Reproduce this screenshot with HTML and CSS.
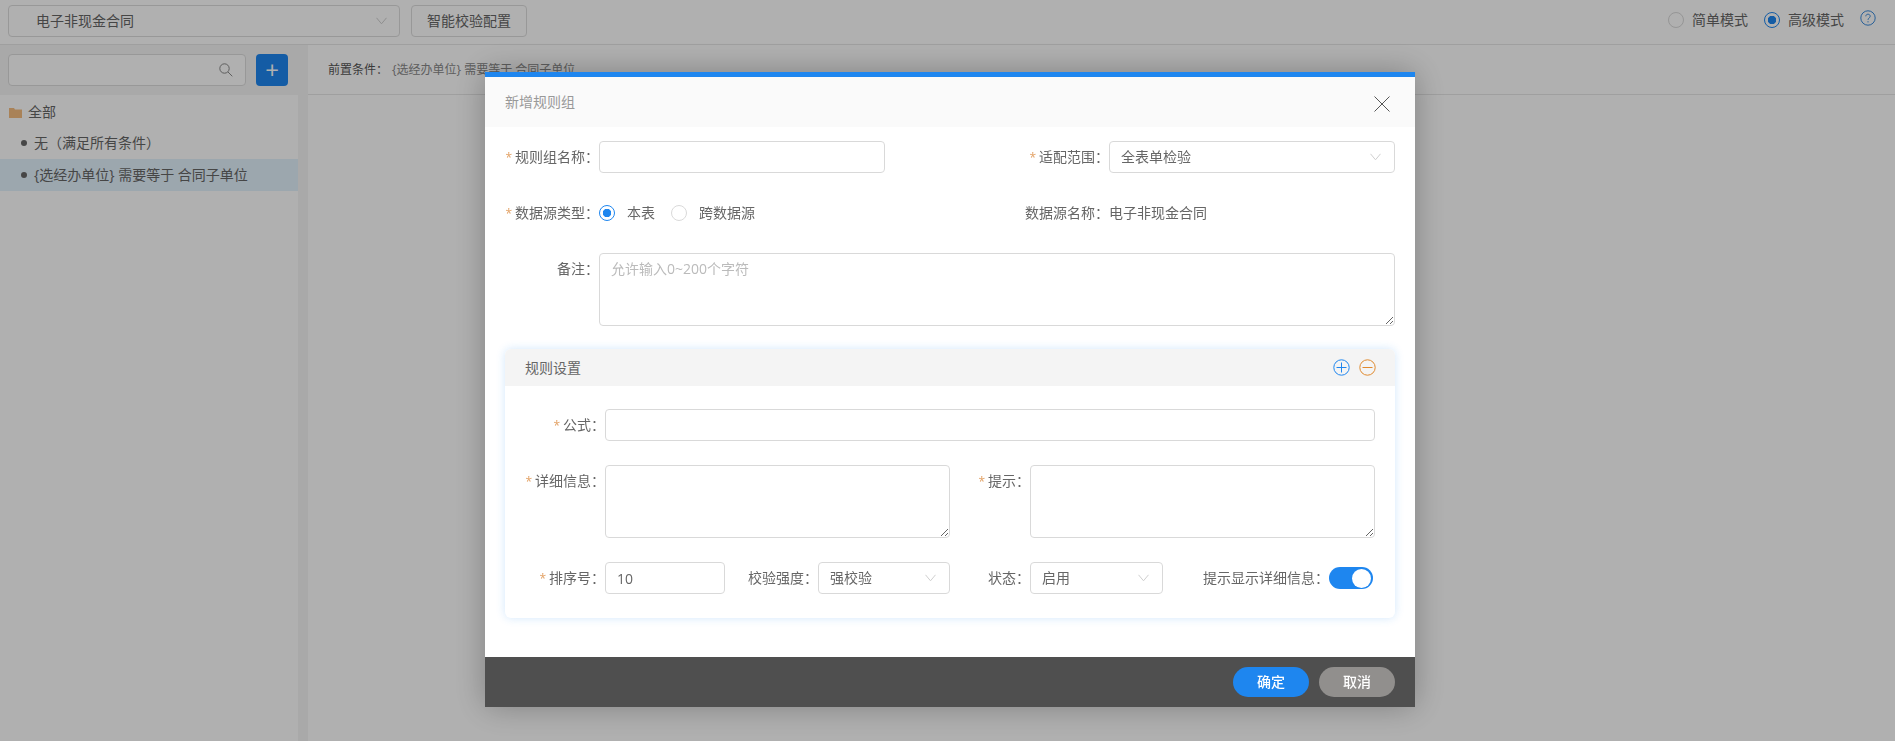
FILE: index.html
```html
<!DOCTYPE html>
<html lang="zh-CN">
<head>
<meta charset="utf-8">
<title>智能校验</title>
<link rel="stylesheet" href="styles.css">
</head>
<body>
<div class="page">
  <header class="topbar">
    <div class="top-select"><span>电子非现金合同</span>
      <svg class="chev" width="11" height="8" viewBox="0 0 11 8"><path d="M.5.800l5 6 5-6"/></svg>
    </div>
    <button class="top-btn">智能校验配置</button>
    <div class="modes">
      <span class="radio"></span><span class="mode-text">简单模式</span>
      <span class="radio radio-on"></span><span class="mode-text">高级模式</span>
      <svg class="help" width="16" height="16" viewBox="0 0 16 16"><circle cx="8" cy="8" r="7.200"/><path d="M5.800 6.300C5.800 5 6.800 4.200 8 4.200s2.200.8 2.200 2c0 1.800-2.200 1.700-2.200 3.700"/><path d="M8 11.200v1.200"/></svg>
    </div>
  </header>
  <div class="main">
    <aside class="sidebar">
      <div class="search-row">
        <div class="search">
          <svg width="14" height="14" viewBox="0 0 14 14"><circle cx="5.500" cy="5.500" r="4.700"/><path d="M9 9l4.300 4.300"/></svg>
        </div>
        <button class="add">+</button>
      </div>
      <div class="tree-root">
        <svg width="13" height="11" viewBox="0 0 13 11"><path d="M0 1h5l1 1.500h7V11H0z"/></svg>
        <span>全部</span>
      </div>
      <div class="tree-item"><i class="dot"></i>无（满足所有条件）</div>
      <div class="tree-item tree-selected"><i class="dot"></i>{选经办单位} 需要等于 合同子单位</div>
    </aside>
    <div class="gutter"></div>
    <section class="content">
      <div class="cond"><b>前置条件：</b><span>{选经办单位} 需要等于 合同子单位</span></div>
    </section>
  </div>
</div>

<div class="overlay">
  <div class="modal">
    <div class="modal-head">
      <span>新增规则组</span>
      <svg class="close" width="16" height="16" viewBox="0 0 16 16"><path d="M.5.500l15 15M15.500.500l-15 15"/></svg>
    </div>
    <div class="modal-body">
      <div class="row">
        <div class="field"><label class="lab w94"><em>*</em>规则组名称：</label><input class="ctl w286" type="text"></div>
        <div class="field"><label class="lab"><em>*</em>适配范围：</label>
          <div class="ctl w286 sel"><span>全表单检验</span><svg class="chev" width="11" height="8" viewBox="0 0 11 8"><path d="M.5.800l5 6 5-6"/></svg></div>
        </div>
      </div>
      <div class="row">
        <div class="field"><label class="lab w94"><em>*</em>数据源类型：</label>
          <div class="radios">
            <span class="radio radio-on"></span><span class="rtext">本表</span>
            <span class="radio"></span><span class="rtext">跨数据源</span>
          </div>
        </div>
        <div class="field"><label class="lab">数据源名称：</label><div class="w286 val">电子非现金合同</div></div>
      </div>
      <div class="field">
        <label class="lab w94">备注：</label>
        <textarea class="ctl area-note" placeholder="允许输入0~200个字符"></textarea>
      </div>
      <div class="card">
        <div class="card-head">
          <span>规则设置</span>
          <div class="card-icons">
            <svg class="ic-plus" width="17" height="17" viewBox="0 0 17 17"><circle cx="8.500" cy="8.500" r="7.700"/><path d="M3.500 8.500h10M8.500 3.500v10"/></svg>
            <svg class="ic-minus" width="17" height="17" viewBox="0 0 17 17"><circle cx="8.500" cy="8.500" r="7.700"/><path d="M3.500 8.500h10"/></svg>
          </div>
        </div>
        <div class="card-body">
          <div class="field"><label class="lab w80"><em>*</em>公式：</label><input class="ctl grow" type="text"></div>
          <div class="row">
            <div class="field"><label class="lab w80"><em>*</em>详细信息：</label><textarea class="ctl area-rule"></textarea></div>
            <div class="field"><label class="lab w80"><em>*</em>提示：</label><textarea class="ctl area-rule"></textarea></div>
          </div>
          <div class="field">
            <label class="lab w80"><em>*</em>排序号：</label>
            <input class="ctl w120" type="text" value="10">
            <label class="lab w93">校验强度：</label>
            <div class="ctl w132 sel"><span>强校验</span><svg class="chev" width="11" height="8" viewBox="0 0 11 8"><path d="M.5.800l5 6 5-6"/></svg></div>
            <label class="lab w80">状态：</label>
            <div class="ctl w133 sel"><span>启用</span><svg class="chev" width="11" height="8" viewBox="0 0 11 8"><path d="M.5.800l5 6 5-6"/></svg></div>
            <label class="lab w166">提示显示详细信息：</label>
            <span class="toggle"><i></i></span>
          </div>
        </div>
      </div>
    </div>
    <div class="modal-foot">
      <button class="pill pill-ok">确定</button>
      <button class="pill pill-cancel">取消</button>
    </div>
  </div>
</div>
</body>
</html>
```
FILE: styles.css
```css
* { box-sizing: border-box; }
html, body { height: 100%; }
body {
  margin: 0;
  overflow: hidden;
  background: #fff;
  color: #666;
  font: 14px/20px "Open Sans", "Noto Sans CJK SC", sans-serif;
}
.page { height: 741px; display: flex; flex-direction: column; }

.topbar {
  height: 45px;
  flex: none;
  display: flex;
  align-items: flex-start;
  padding: 5px 8px 0;
  border-bottom: 1px solid #e6e6e6;
}
.top-select {
  width: 392px;
  height: 32px;
  display: flex;
  align-items: center;
  justify-content: space-between;
  padding: 0 12px 0 27px;
  border: 1px solid #ddd;
  border-radius: 4px;
}
.top-btn {
  margin-left: 11px;
  width: 116px;
  height: 32px;
  padding: 0;
  background: #fff;
  border: 1px solid #ddd;
  border-radius: 4px;
  color: #666;
  font: inherit;
}
.modes { margin-left: auto; display: flex; align-items: center; height: 30px; padding-right: 11px; }
.mode-text { margin: 0 16px 0 8px; }
.help { fill: none; stroke: #3b8bdc; stroke-width: 1; margin-top: -4px; }

.chev { fill: none; stroke: #cfcfcf; stroke-width: 1; flex: none; }

.radio {
  width: 16px;
  height: 16px;
  flex: none;
  border: 1px solid #d9d9d9;
  border-radius: 50%;
  background: #fff;
}
.radio-on {
  border-color: #1e86ef;
  background: radial-gradient(circle, #1e86ef 0 4px, #fff 4.500px);
}

.main { flex: 1; display: flex; min-height: 0; }
.sidebar { width: 298px; flex: none; background: #fff; }
.search-row {
  height: 50px;
  display: flex;
  align-items: center;
  gap: 10px;
  padding: 0 10px 0 8px;
  background: #f5f5f5;
}
.search {
  width: 238px;
  height: 32px;
  display: flex;
  align-items: center;
  justify-content: flex-end;
  padding-right: 12px;
  background: #fff;
  border: 1px solid #ddd;
  border-radius: 4px;
}
.search svg { fill: none; stroke: #888; stroke-width: 1; }
.add {
  width: 32px;
  height: 32px;
  padding: 0;
  background: #1e86ef;
  border: 0;
  border-radius: 4px;
  color: #fff;
  font: 24px/30px "Open Sans", sans-serif;
}
.tree-root {
  height: 32px;
  padding: 2px 0 0 9px;
  display: flex;
  align-items: center;
  gap: 6px;
}
.tree-root svg { fill: #f5bd80; }
.tree-item {
  height: 32px;
  display: flex;
  align-items: center;
  padding-left: 21px;
}
.tree-selected { background: #e3f2fd; }
.dot { width: 6px; height: 6px; margin-right: 7px; border-radius: 50%; background: #666; flex: none; }
.gutter { width: 10px; flex: none; background: #f5f5f5; }
.content { flex: 1; }
.cond {
  height: 50px;
  display: flex;
  align-items: center;
  padding-left: 20px;
  border-bottom: 1px solid #e6e6e6;
  font-size: 12px;
}
.cond b { font-weight: 400; color: #555; margin-right: 4px; }
.cond span { color: #888; }

.overlay { position: fixed; inset: 0; background: rgba(0, 0, 0, .31); }
.modal {
  position: absolute;
  left: 485px;
  top: 72px;
  width: 930px;
  height: 635px;
  display: flex;
  flex-direction: column;
  background: #fff;
  box-shadow: 0 0 30px rgba(0, 0, 0, .28);
}
.modal-head {
  height: 55px;
  flex: none;
  display: flex;
  align-items: center;
  justify-content: space-between;
  padding: 0 25px 0 20px;
  background: #fafafa;
  border-top: 5px solid #1e86ef;
  color: #999;
}
.close { fill: none; stroke: #555; stroke-width: 1; margin-top: 4px; }
.modal-body { flex: 1; padding: 14px 20px 0; display: flex; flex-direction: column; gap: 24px; }
.row { display: flex; justify-content: space-between; }
.field { display: flex; align-items: flex-start; }
.lab { flex: none; height: 32px; line-height: 32px; text-align: right; white-space: nowrap; color: #666; }
.lab em { font-style: normal; font-size: 12px; line-height: 0; color: #e2a063; margin-right: 3px; }
.w80 { width: 80px; }
.w93 { width: 93px; }
.w94 { width: 94px; }
.w166 { width: 166px; }
.ctl {
  height: 32px;
  flex: none;
  padding: 0 13px 0 11px;
  background: #fff;
  border: 1px solid #d9d9d9;
  border-radius: 4px;
  color: #666;
  font: inherit;
  outline: 0;
}
.w120 { width: 120px; }
.w132 { width: 132px; }
.w133 { width: 133px; }
.w286 { width: 286px; }
.grow { flex: 1; width: 0; }
.sel { display: flex; align-items: center; justify-content: space-between; }
.val { line-height: 32px; }
.radios { display: flex; align-items: center; height: 32px; }
.rtext { margin: 0 16px 0 12px; }
textarea.ctl { display: block; padding: 5px 11px; font: inherit; }
textarea.ctl::placeholder { color: #bbb; }
.area-note { width: 796px; height: 73px; }
.area-rule { width: 345px; height: 73px; }
.card {
  height: 269px;
  margin-top: -1px;
  border-radius: 6px;
  box-shadow: 0 0 10px rgba(30, 134, 239, .2);
}
.card-head {
  height: 37px;
  display: flex;
  align-items: center;
  justify-content: space-between;
  padding: 0 19px 0 20px;
  background: #f4f4f4;
  border-radius: 6px 6px 0 0;
}
.card-icons { display: flex; gap: 9px; }
.card-icons svg { fill: none; stroke-width: 1; }
.ic-plus { stroke: #1e86ef; }
.ic-minus { stroke: #e08a2e; }
.card-body { padding: 23px 20px 0; display: flex; flex-direction: column; gap: 24px; }
.toggle {
  width: 44px;
  height: 22px;
  margin-top: 5px;
  flex: none;
  display: flex;
  justify-content: flex-end;
  align-items: center;
  padding-right: 2px;
  background: #1e86ef;
  border-radius: 11px;
}
.toggle i { width: 19px; height: 19px; border-radius: 50%; background: #fff; }
.modal-foot {
  height: 50px;
  flex: none;
  display: flex;
  align-items: center;
  justify-content: flex-end;
  gap: 10px;
  padding-right: 20px;
  background: #4f4f4f;
}
.pill {
  width: 76px;
  height: 30px;
  padding: 0;
  border: 0;
  border-radius: 15px;
  color: #fff;
  font: inherit;
  font-weight: 500;
}
.pill-ok { background: #1e86ef; }
.pill-cancel { background: #918f8d; }
```
